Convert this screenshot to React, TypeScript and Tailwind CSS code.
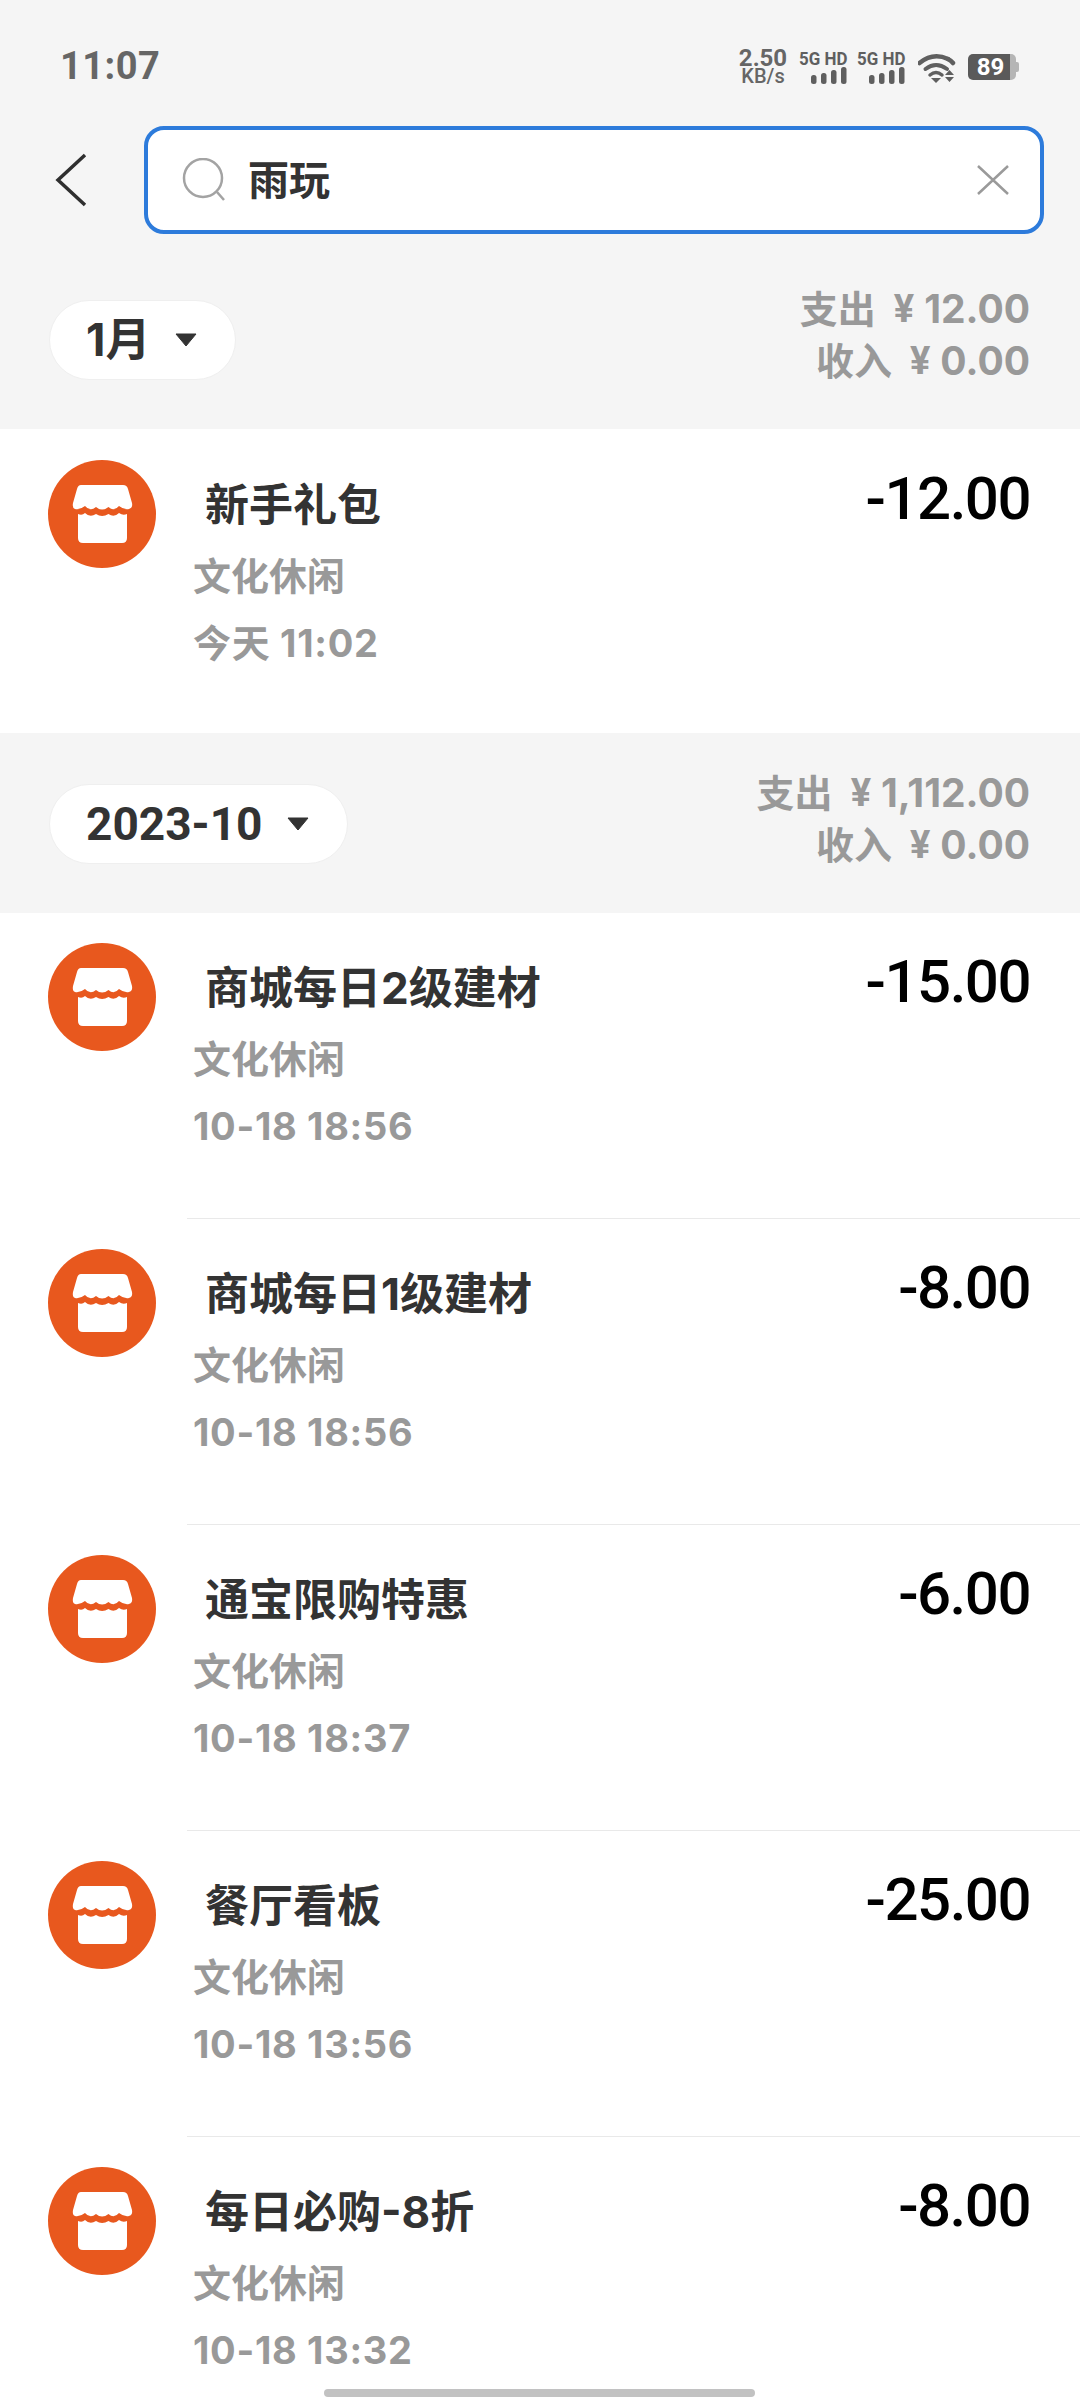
const sections = [
  {
    month: "1月",
    monthClass: "text-[45px]",
    rowClass: "h-[304px] pt-[31px]",
    spend: "12.00",
    income: "0.00",
    rows: [{ title: "新手礼包", date: "今天 11:02", amount: "-12.00" }],
  },
  {
    month: "2023-10",
    monthClass: "text-[46px] [font-family:Roboto,sans-serif]",
    rowClass: "h-[305px] pt-[30px]",
    spend: "1,112.00",
    income: "0.00",
    rows: [
      { title: "商城每日2级建材", date: "10-18 18:56", amount: "-15.00" },
      { title: "商城每日1级建材", date: "10-18 18:56", amount: "-8.00" },
      { title: "通宝限购特惠", date: "10-18 18:37", amount: "-6.00" },
      { title: "餐厅看板", date: "10-18 13:56", amount: "-25.00" },
      { title: "每日必购-8折", date: "10-18 13:32", amount: "-8.00" },
    ],
  },
];

function Signal() {
  return (
    <div className="flex flex-col items-end w-[48px]">
      <span className="text-[18px] leading-[15px] font-bold text-[#5f5f5f] whitespace-nowrap scale-x-[0.94] origin-right [font-family:Roboto,sans-serif]">
        5G HD
      </span>
      <svg width="36" height="17" viewBox="0 0 36 17" className="mt-[1px]" fill="#5f5f5f">
        <rect x="0" y="8" width="5.5" height="9" rx="2.5" />
        <rect x="10" y="6" width="5.5" height="11" rx="2.5" />
        <rect x="20" y="3" width="5.5" height="14" rx="2.5" />
        <rect x="30" y="0" width="5.5" height="17" rx="2.5" />
      </svg>
    </div>
  );
}

function StatusBar() {
  return (
    <div className="h-[126px] flex justify-between pl-[60px] pr-[60px] pt-[47px] text-[#666666] [font-family:Roboto,sans-serif]">
      <div className="text-[38px] leading-[38px] font-bold tracking-[0.5px]">11:07</div>
      <div className="flex items-start h-[36px]">
        <div className="flex flex-col items-center w-[50px] mt-[1px] mr-[11px]">
          <span className="text-[24px] leading-[20px] font-bold">2.50</span>
          <span className="text-[20px] leading-[17px] font-medium">KB/s</span>
        </div>
        <div className="flex gap-[10px] mt-[4px]">
          <Signal />
          <Signal />
        </div>
        <svg width="38" height="30" viewBox="0 0 38 30" className="ml-[13px] mt-[6px]" fill="none">
          <path d="M1.5 10 Q15 -1 30 6" stroke="#5f5f5f" strokeWidth="4.5" strokeLinecap="round" />
          <path d="M30 6 Q33 7.5 35 10" stroke="#5f5f5f" strokeWidth="4.5" strokeLinecap="round" />
          <path d="M7.5 16 Q18 8 29 16" stroke="#5f5f5f" strokeWidth="4" strokeLinecap="round" />
          <path d="M12 22 Q18 17 24 22" stroke="#5f5f5f" strokeWidth="3.5" strokeLinecap="round" />
          <path d="M13 25 H23 L18 30 Z" fill="#5f5f5f" />
          <path d="M31.5 17 L36 22 H27 Z M27 24 H36 L31.5 29 Z" fill="#5f5f5f" />
        </svg>
        <div className="ml-[12px] mt-[7px] w-[52px] h-[26px] flex items-center">
          <div className="w-[48px] h-[26px] rounded-[5px] bg-[linear-gradient(90deg,#5a5a5a_0,#5a5a5a_88%,#b5b5b5_88%)] text-white text-[24px] leading-[26px] font-bold text-center pr-[3px]">
            89
          </div>
          <div className="w-[3px] h-[10px] bg-[#b5b5b5] rounded-r-[2px]" />
        </div>
      </div>
    </div>
  );
}

function SearchBar() {
  return (
    <div className="flex items-center h-[108px] mb-[15px] pl-[55px] pr-[36px]">
      <svg width="32" height="54" viewBox="0 0 32 54" fill="none" className="mr-[57px]">
        <path d="M30 2 L3 27 L30 52" stroke="#2f2f2f" strokeWidth="3.5" />
      </svg>
      <div className="flex-1 h-[108px] bg-white border-[4px] border-[#2d7bdb] rounded-[20px] flex items-center pl-[34px] pr-[30px]">
        <svg width="46" height="44" viewBox="0 0 46 44" fill="none">
          <circle cx="21" cy="20" r="19" stroke="#a3a3a3" strokeWidth="2.5" />
          <path d="M35 34 L42 42" stroke="#a3a3a3" strokeWidth="2.5" />
        </svg>
        <span className="ml-[20px] text-[41px] leading-[50px] font-bold text-[#333333]">雨玩</span>
        <svg width="34" height="30" viewBox="0 0 34 30" fill="none" className="ml-auto">
          <path d="M2 1 L32 29 M32 1 L2 29" stroke="#9a9a9a" strokeWidth="2.5" />
        </svg>
      </div>
    </div>
  );
}

function MonthHeader({
  month,
  monthClass,
  spend,
  income,
}: {
  month: string;
  monthClass: string;
  spend: string;
  income: string;
}) {
  return (
    <div className="h-[180px] flex justify-between items-start pl-[49px] pr-[50px]">
      <div className="mt-[51px] h-[80px] pl-[36px] pr-[38px] bg-white rounded-full border border-[#efefef] flex items-center gap-[25px]">
        <span className={`${monthClass} leading-[50px] font-bold text-[#333333]`}>{month}</span>
        <svg width="22" height="14" viewBox="0 0 22 14">
          <path d="M1 1 H21 L11 13 Z" fill="#333333" stroke="#333333" strokeLinejoin="round" />
        </svg>
      </div>
      <div className="mt-[34px] text-right text-[38px] leading-[52px] font-bold text-[#999999]">
        <div className="flex justify-end">
          支出<span className="ml-[18px] mr-[10px] [font-family:Roboto,sans-serif]">¥</span>
          <span className="text-[39px]">{spend}</span>
        </div>
        <div className="flex justify-end">
          收入<span className="ml-[18px] mr-[10px] [font-family:Roboto,sans-serif]">¥</span>
          <span className="text-[39px]">{income}</span>
        </div>
      </div>
    </div>
  );
}

function StoreIcon() {
  return (
    <svg width="108" height="108" viewBox="0 0 108 108" className="shrink-0">
      <circle cx="54" cy="54" r="54" fill="#e8581e" />
      <path
        d="M33 25 H75 Q79 25 80 29 L84 43 Q85 48 81 49 Q76 50 71 46 Q66 52 60.5 47 Q54 52 48 47 Q42 52 37 46 Q32 50 27 49 Q24 48 25 43 L29 29 Q30 25 33 25 Z"
        fill="#ffffff"
      />
      <path
        d="M30 54 Q34 56 37 53 Q42 58 48 54 Q54 58 60.5 54 Q66 58 71 53 Q75 56 79 54 V78 Q79 83 74 83 H35 Q30 83 30 78 Z"
        fill="#ffffff"
      />
    </svg>
  );
}

function Row({
  title,
  date,
  amount,
  rowClass,
}: {
  title: string;
  date: string;
  amount: string;
  rowClass: string;
}) {
  return (
    <div className={`${rowClass} flex items-start pl-[48px] pr-[50px]`}>
      <StoreIcon />
      <div className="ml-[37px] flex-1">
        <div className="mt-[15px] ml-[12px] text-[44px] leading-[60px] font-bold text-[#333333]">{title}</div>
        <div className="mt-[11px] text-[38px] leading-[60px] font-bold text-[#999999]">文化休闲</div>
        <div className="mt-[7px] text-[38px] leading-[60px] font-bold tracking-[0.7px] text-[#999999]">{date}</div>
      </div>
      <div className="text-[60px] leading-[68px] mt-[5px] font-medium tracking-[-1.5px] text-black [font-family:Roboto,sans-serif]">
        {amount}
      </div>
    </div>
  );
}

export default function App() {
  return (
    <div className="relative w-[1080px] h-[2400px] overflow-hidden bg-[#f5f5f5] [font-family:Inter,'Noto_Sans_CJK_SC',sans-serif]">
      <StatusBar />
      <SearchBar />
      {sections.map((section) => (
        <div key={section.month}>
          <MonthHeader
            month={section.month}
            monthClass={section.monthClass}
            spend={section.spend}
            income={section.income}
          />
          <div className="bg-white">
            {section.rows.map((row, i) => (
              <div key={row.title}>
                {i > 0 && <div className="h-[1px] ml-[187px] bg-[#e9e9e9]" />}
                <Row {...row} rowClass={section.rowClass} />
              </div>
            ))}
          </div>
        </div>
      ))}
      <div className="absolute left-[324px] bottom-[3px] w-[431px] h-[8px] rounded-full bg-[#c2c2c2]" />
    </div>
  );
}
